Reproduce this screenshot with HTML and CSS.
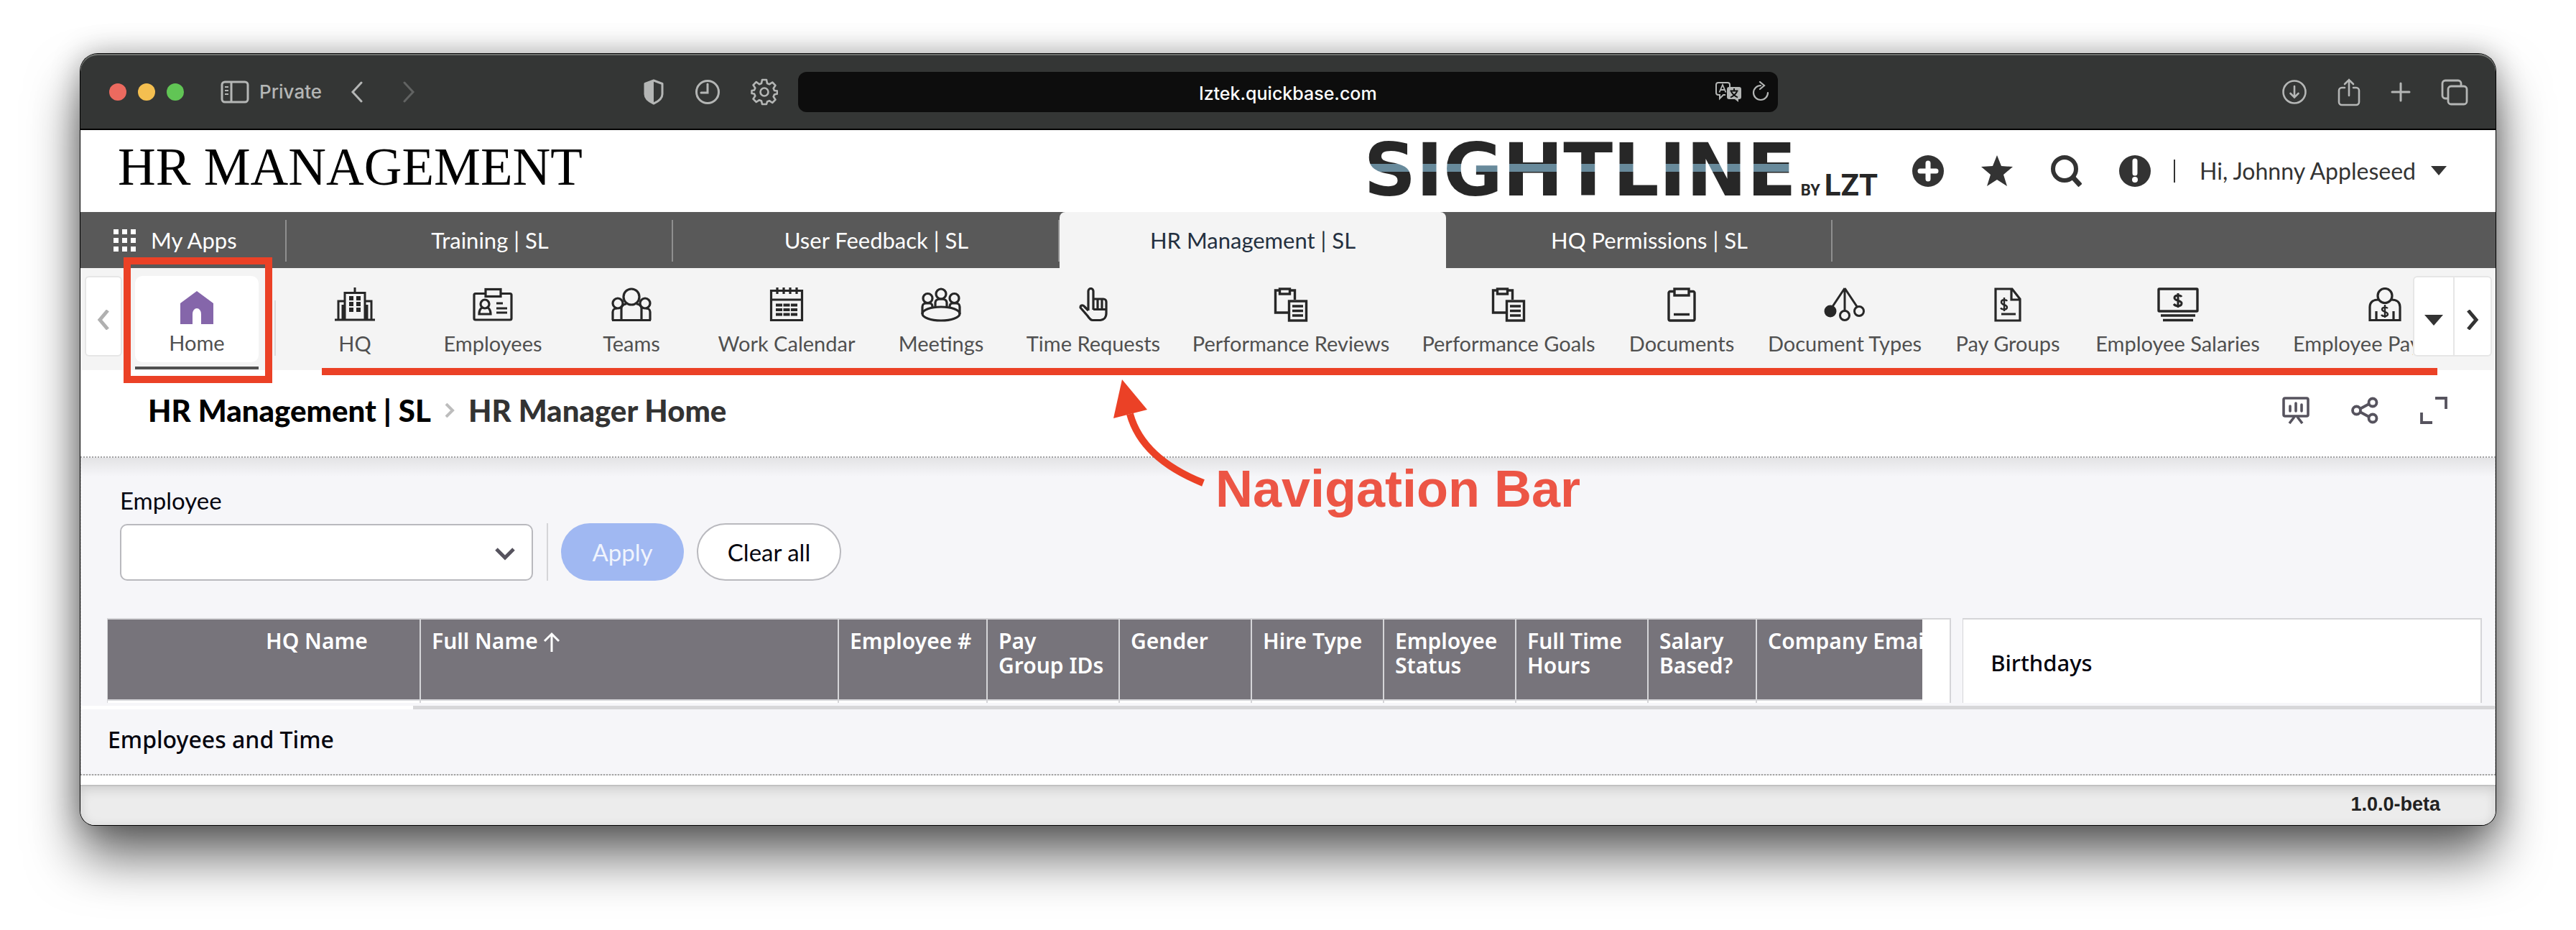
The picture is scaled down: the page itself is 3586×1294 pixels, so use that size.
FILE: index.html
```html
<!DOCTYPE html>
<html lang="en">
<head>
<meta charset="utf-8">
<title>HR Management | SL - HR Manager Home</title>
<link rel="stylesheet" href="styles.css">
</head>
<body>
<div class="window">
  <header class="toolbar">
    <div class="toolbar-left">
      <div class="lights"><span class="light light-red"></span><span class="light light-yellow"></span><span class="light light-green"></span></div>
      <button class="tool sidebar-button" type="button"><svg width="40" height="32" viewBox="0 0 40 32" fill="none" stroke="currentColor" stroke-width="3"><rect x="2" y="2" width="36" height="28" rx="4"/><path d="M15 2v28"/><path d="M6 9h5M6 14h5M6 19h5" stroke-width="2"/></svg><span>Private</span></button>
      <button class="tool" type="button" aria-label="Back"><svg width="18" height="30" viewBox="0 0 18 30" fill="none" stroke="currentColor" stroke-width="3" stroke-linecap="round"><path d="M15 2 3 15l12 13"/></svg></button>
      <button class="tool tool-forward" type="button" aria-label="Forward"><svg width="18" height="30" viewBox="0 0 18 30" fill="none" stroke="currentColor" stroke-width="3" stroke-linecap="round"><path d="M3 2l12 13L3 28"/></svg></button>
      <div class="privacy">
        <button class="tool" type="button" aria-label="Privacy report"><svg width="30" height="36" viewBox="0 0 30 36"><path d="M15 2 27 6.500V21c0 6-5 10-12 13C8 31 3 27 3 21V6.500z" fill="none" stroke="currentColor" stroke-width="3" stroke-linejoin="round"/><path d="M15 2v32C8 31 3 27 3 21V6.500z" fill="currentColor"/></svg></button>
        <button class="tool" type="button" aria-label="History"><svg width="36" height="36" viewBox="0 0 36 36" fill="none" stroke="currentColor" stroke-width="3"><circle cx="18" cy="18" r="15.500"/><path d="M18 7v12H9" stroke-linecap="round"/></svg></button>
        <button class="tool" type="button" aria-label="Settings"><svg width="38" height="38" viewBox="0 0 38 38" fill="none" stroke="currentColor" stroke-width="2.600" stroke-linejoin="round"><path d="M16 2h6l1 5 3 1.300 4.200-2.800 4.300 4.300-2.800 4.200L33 17l4 .500v4l-4 1-1.300 3 2.800 4.200-4.300 4.300-4.200-2.800L23 32.500 22 36h-6l-1-4.500-3-1.300-4.200 2.800-4.300-4.300 2.800-4.200L5 21.500 1.500 21v-4L5 16.500l1.300-3L3.500 9.300 7.800 5 12 8.300 15 7z"/><circle cx="19" cy="19" r="5.500"/></svg></button>
      </div>
    </div>
    <div class="address">
      <span class="address-text">lztek.quickbase.com</span>
      <span class="address-tools">
        <svg width="38" height="30" viewBox="0 0 38 30"><path d="M4 2h14a3 3 0 0 1 3 3v3M2 5v11a3 3 0 0 0 3 3h2v5l5-5h3M2 5a3 3 0 0 1 3-3" fill="none" stroke="currentColor" stroke-width="2"/><path d="M6.500 15.500 11 5l4.500 10.500M8 12h6" fill="none" stroke="currentColor" stroke-width="1.800"/><path d="M20 8h14a3 3 0 0 1 3 3v11a3 3 0 0 1-3 3h-1v4l-5-4h-8a3 3 0 0 1-3-3V11a3 3 0 0 1 3-3z" fill="currentColor"/><path d="M27 10v3M21.500 13.500h11M23 14.500c2 4 5 6 9 8M31 14.500c-2 4-5 6-9 8" fill="none" stroke="#0d0d0d" stroke-width="1.800"/></svg>
        <svg width="24" height="28" viewBox="0 0 24 28" fill="none" stroke="currentColor" stroke-width="2.200" stroke-linecap="round"><path d="M12 6a10 10 0 1 0 10 10M11 1l6 5-6 5"/></svg>
      </span>
    </div>
    <div class="toolbar-right">
      <button class="tool" type="button" aria-label="Downloads"><svg width="36" height="36" viewBox="0 0 36 36" fill="none" stroke="currentColor" stroke-width="2.600" stroke-linecap="round"><circle cx="18" cy="18" r="15.500"/><path d="M18 10v15M12.500 20l5.500 5.500 5.500-5.500"/></svg></button>
      <button class="tool" type="button" aria-label="Share"><svg width="32" height="40" viewBox="0 0 32 40" fill="none" stroke="currentColor" stroke-width="2.600" stroke-linecap="round"><path d="M10 14H6a4 4 0 0 0-4 4v16a4 4 0 0 0 4 4h20a4 4 0 0 0 4-4V18a4 4 0 0 0-4-4h-4M16 25V3M10 9l6-6 6 6"/></svg></button>
      <button class="tool" type="button" aria-label="New tab"><svg width="28" height="28" viewBox="0 0 28 28" stroke="currentColor" stroke-width="3" stroke-linecap="round"><path d="M14 2v24M2 14h24"/></svg></button>
      <button class="tool" type="button" aria-label="Tab overview"><svg width="38" height="38" viewBox="0 0 38 38" fill="none" stroke="currentColor" stroke-width="2.800"><rect x="10" y="11" width="26" height="25" rx="4"/><path d="M10 28H6a4 4 0 0 1-4-4V7a4 4 0 0 1 4-4h18a4 4 0 0 1 4 4v4"/></svg></button>
    </div>
  </header>

  <div class="app">
    <div class="masthead">
      <h1 class="site-title">HR MANAGEMENT</h1>
      <div class="logo"><span class="logo-main">SIGHTLINE</span><span class="logo-by">BY</span><span class="logo-brand">LZT</span></div>
      <div class="actions">
        <button class="action" type="button" aria-label="Add"><svg width="44" height="44" viewBox="0 0 44 44"><circle cx="22" cy="22" r="22" fill="currentColor"/><path d="M22 11v22M11 22h22" stroke="#fff" stroke-width="7" stroke-linecap="round"/></svg></button>
        <button class="action" type="button" aria-label="Favorites"><svg width="44" height="44" viewBox="0 0 44 44"><path d="M22 0l6 15 16 1-13 11 5 16-14-9-14 9 5-16L0 16l16-1z" fill="currentColor"/></svg></button>
        <button class="action" type="button" aria-label="Search"><svg width="44" height="44" viewBox="0 0 44 44" fill="none" stroke="currentColor"><circle cx="20" cy="19" r="16" stroke-width="6"/><path d="M31 30l11 12" stroke-width="7"/></svg></button>
        <button class="action" type="button" aria-label="Alerts"><svg width="44" height="44" viewBox="0 0 44 44"><circle cx="22" cy="22" r="22" fill="currentColor"/><path d="M22 8v17" stroke="#fff" stroke-width="7" stroke-linecap="round"/><circle cx="22" cy="34" r="4" fill="#fff"/></svg></button>
      </div>
      <button class="user" type="button"><span>Hi, Johnny Appleseed</span><svg width="22" height="14" viewBox="0 0 22 14"><path d="M0 0h22L11 13z" fill="currentColor"/></svg></button>
    </div>

    <nav class="apps">
      <a class="my-apps" href="#"><svg width="31" height="31" viewBox="0 0 31 31" fill="currentColor"><path d="M0 0h7v7H0zM12 0h7v7h-7zM24 0h7v7h-7zM0 12h7v7H0zM12 12h7v7h-7zM24 12h7v7h-7zM0 24h7v7H0zM12 24h7v7h-7zM24 24h7v7h-7z"/></svg>My Apps</a>
      <a class="app-tab" href="#">Training | SL</a>
      <a class="app-tab" href="#">User Feedback | SL</a>
      <a class="app-tab app-tab-active" href="#">HR Management | SL</a>
      <a class="app-tab" href="#">HQ Permissions | SL</a>
    </nav>

    <nav class="tables">
      <button class="pager pager-prev" type="button" aria-label="Previous"><svg width="18" height="28" viewBox="0 0 18 28" fill="none" stroke="currentColor" stroke-width="5"><path d="M15 1 4 14l11 13"/></svg></button>
      <a class="home" href="#"><svg width="46" height="46" viewBox="0 0 46 46"><path d="M23 0 46 17v29H29V32a6 8 0 0 0-12 0v14H0V17z" fill="#8566aa"/></svg>Home</a>
      <ul class="table-list">
        <li><a href="#"><svg width="56" height="48" viewBox="0 0 56 48" fill="none" stroke="currentColor" stroke-width="3"><path d="M0 45h56M5 45V19h9M51 45V19h-9M14 45V7.500h28V45M28 7V0M11 24v21M45 24v21"/><path d="M20 12h6v6h-6zM30 12h6v6h-6zM20 20h6v6h-6zM30 20h6v6h-6zM20 28h6v6h-6zM30 28h6v6h-6z" fill="currentColor" stroke="none"/></svg>HQ</a></li>
        <li><a href="#"><svg width="56" height="48" viewBox="0 0 56 48" fill="none" stroke="currentColor" stroke-width="3.200"><path d="M18 8.500H4a2 2 0 0 0-2 2V43a2 2 0 0 0 2 2h48a2 2 0 0 0 2-2V10.500a2 2 0 0 0-2-2H39"/><rect x="18" y="2.500" width="21" height="10"/><circle cx="17" cy="23" r="6"/><path d="M13 28c-3 2-4 5-4 9h16c0-4-1-7-4-9M33 22h9M33 29h15M33 35h15"/></svg>Employees</a></li>
        <li><a href="#"><svg width="56" height="48" viewBox="0 0 56 48" fill="none" stroke="currentColor" stroke-width="3.200"><circle cx="28" cy="13" r="11"/><circle cx="9" cy="22" r="7"/><circle cx="47" cy="22" r="7"/><path d="M2 45.500V34c0-3 3-5 6-5M54 45.500V34c0-3-3-5-6-5M14 45V29c0-3 3-6 7-6M42 45V29c0-3-3-6-7-6M1 45.500h54"/></svg>Teams</a></li>
        <li><a href="#"><svg width="48" height="48" viewBox="0 0 48 48" fill="none" stroke="currentColor" stroke-width="3.200"><path d="M2.500 4.500h43v41h-43zM2 17h44"/><path d="M11 0v9M20 0v9M29 0v9M38 0v9"/><path d="M9 24.500h30M9 31h30M9 37.500h30" stroke-width="4" stroke-dasharray="9 1.500"/></svg>Work Calendar</a></li>
        <li><a href="#"><svg width="56" height="48" viewBox="0 0 56 48" fill="none" stroke="currentColor" stroke-width="3.200"><circle cx="28" cy="9" r="7"/><circle cx="9.500" cy="15" r="6.500"/><circle cx="46.500" cy="15" r="6.500"/><ellipse cx="28" cy="36.500" rx="26" ry="9.500"/><path d="M2 37V27c0-3 2-5 5-5h5c3 0 4 2 4 5M54 37V27c0-3-2-5-5-5h-5c-3 0-4 2-4 5M20 27v-6c0-3 3-5 8-5s8 2 8 5v6"/></svg>Meetings</a></li>
        <li><a href="#"><svg width="40" height="48" viewBox="0 0 40 48" fill="none" stroke="currentColor" stroke-width="3.200" stroke-linejoin="round"><path d="M13 32V5a3.500 3.500 0 0 1 7 0v11h14a4 4 0 0 1 4 4v16c0 6-4 9-8 9.500H19c-3 0-5-3-7-6L2 28c0-4 4-4 6-1l5 5M20 13v18M26 15v16M32 15v16M20 30.500h17"/></svg>Time Requests</a></li>
        <li><a href="#"><svg width="48" height="48" viewBox="0 0 48 48" fill="none" stroke="currentColor" stroke-width="3.400"><path d="M8 4H2.500v31H20M24 4h5.500v13"/><rect x="8.500" y="2" width="14" height="7"/><rect x="21.500" y="19" width="24" height="27"/><path d="M26 26h15M26 32.500h15M26 39h15"/></svg>Performance Reviews</a></li>
        <li><a href="#"><svg width="48" height="48" viewBox="0 0 48 48" fill="none" stroke="currentColor" stroke-width="3.400"><path d="M8 4H2.500v31H20M24 4h5.500v13"/><rect x="8.500" y="2" width="14" height="7"/><rect x="21.500" y="19" width="24" height="27"/><path d="M26 26h15M26 32.500h15M26 39h15"/></svg>Performance Goals</a></li>
        <li><a href="#"><svg width="40" height="48" viewBox="0 0 40 48" fill="none" stroke="currentColor" stroke-width="3.400"><path d="M10 5.500H4a2 2 0 0 0-2 2V44a2 2 0 0 0 2 2h32a2 2 0 0 0 2-2V7.500a2 2 0 0 0-2-2h-6"/><rect x="10" y="2" width="20" height="9"/><path d="M9 37.500h22"/></svg>Documents</a></li>
        <li><a href="#"><svg width="58" height="48" viewBox="0 0 58 48" fill="none" stroke="currentColor" stroke-width="3"><path d="M29 1 11 28M29 1v31M29 1l18 27"/><circle cx="9" cy="33" r="7" fill="currentColor"/><circle cx="29" cy="39" r="6.500"/><circle cx="49" cy="33" r="6.500"/></svg>Document Types</a></li>
        <li><a href="#"><svg width="38" height="48" viewBox="0 0 38 48" fill="none" stroke="currentColor" stroke-width="3.200"><path d="M2 2h23l11 14v30H2zM24 2v15h12M10 37h20"/><path d="M18 19c-1-2-8-3-8 1.500s8 3 8 7-7 4-9 1M14 14v19" stroke-width="2.400"/></svg>Pay Groups</a></li>
        <li><a href="#"><svg width="58" height="48" viewBox="0 0 58 48" fill="none" stroke="currentColor" stroke-width="3.400"><rect x="2" y="2" width="54" height="31" rx="1"/><path d="M5 39h48M8 45.500h42"/><path d="M34 13c-2-3-10-3-10 1.500s10 3 10 7.500-8 5-11 1M29 8v20" stroke-width="3"/></svg>Employee Salaries</a></li>
        <li><a href="#"><svg width="46" height="48" viewBox="0 0 46 48" fill="none" stroke="currentColor" stroke-width="3.200"><circle cx="23" cy="11.500" r="10"/><path d="M14 17c-8 0-12 4-12 10v18.500h42V27c0-6-4-10-12-10M11 45V33M35 45V33"/><path d="M27 29c-2-2-8-2-8 1.500s8 3 8 6.500-7 4-9 1M23 24v18" stroke-width="2.400"/></svg>Employee Payments</a></li>
      </ul>
      <div class="pagers">
        <button class="pager pager-more" type="button" aria-label="All tables"><svg width="26" height="15" viewBox="0 0 26 15"><path d="M0 0h26L13 15z" fill="currentColor"/></svg></button>
        <button class="pager pager-next" type="button" aria-label="Next"><svg width="18" height="28" viewBox="0 0 18 28" fill="none" stroke="currentColor" stroke-width="5"><path d="M3 1l11 13L3 27"/></svg></button>
      </div>
    </nav>

    <div class="crumbs">
      <a class="crumb-app" href="#">HR Management | SL</a>
      <svg width="16" height="20" viewBox="0 0 16 20" fill="none" stroke="#bdbdbd" stroke-width="4"><path d="M3 1l9 9-9 9"/></svg>
      <h2 class="crumb-page">HR Manager Home</h2>
      <div class="page-tools">
        <button class="page-tool" type="button" aria-label="Present"><svg width="38" height="38" viewBox="0 0 38 38" fill="none" stroke="currentColor" stroke-width="3.600"><rect x="2" y="2" width="34" height="25" rx="2"/><path d="M17 28l-7 9M21 28l7 9"/><path d="M11 13v7M19 9v11M27 11v9" stroke-linecap="round"/></svg></button>
        <button class="page-tool" type="button" aria-label="Share page"><svg width="38" height="38" viewBox="0 0 38 38" fill="none" stroke="currentColor" stroke-width="3.800"><circle cx="7.500" cy="19" r="5.500"/><circle cx="30" cy="8" r="5.500"/><circle cx="30" cy="30" r="5.500"/><path d="M12 17l13-7M12 21l13 7"/></svg></button>
        <button class="page-tool" type="button" aria-label="Full screen"><svg width="38" height="38" viewBox="0 0 38 38" fill="none" stroke="currentColor" stroke-width="3.800"><path d="M21 2h15v15M2 22v14h15"/></svg></button>
      </div>
    </div>

    <main class="dashboard">
      <form class="filters">
        <label class="filter-label" for="employee">Employee</label>
        <div class="filter-row">
          <div class="select-wrap">
            <select id="employee" class="select"><option></option></select>
            <svg class="select-arrow" width="30" height="20" viewBox="0 0 30 20" fill="none" stroke="#56535e" stroke-width="5"><path d="M3 3l12 12L27 3"/></svg>
          </div>
          <div class="filter-buttons">
            <button class="btn btn-apply" type="button">Apply</button>
            <button class="btn btn-clear" type="button">Clear all</button>
          </div>
        </div>
      </form>

      <div class="widgets">
        <section class="widget report">
          <table class="grid">
            <colgroup><col class="c-tools"><col class="c-hq"><col class="c-name"><col class="c-number"><col class="c-std"><col class="c-std"><col class="c-std"><col class="c-std"><col class="c-std"><col class="c-salary"><col class="c-email"></colgroup>
            <thead><tr>
              <th class="no-rule"></th><th>HQ Name</th>
              <th>Full Name<svg class="sort" width="24" height="28" viewBox="0 0 24 28" fill="none" stroke="currentColor" stroke-width="3"><path d="M12 28V3M2 13 12 3l10 10"/></svg></th>
              <th>Employee #</th><th>Pay<br>Group IDs</th><th>Gender</th><th>Hire Type</th><th>Employee Status</th><th>Full Time Hours</th><th>Salary Based?</th><th>Company Email</th>
            </tr></thead>
            <tbody><tr><td class="no-rule"></td><td></td><td></td><td></td><td></td><td></td><td></td><td></td><td></td><td></td><td></td></tr></tbody>
          </table>
        </section>
        <section class="widget birthdays"><h3>Birthdays</h3></section>
      </div>
      <div class="progress"><div class="progress-done"></div></div>
      <h3 class="section-title">Employees and Time</h3>
    </main>

    <div class="annotation-box"></div>
    <div class="annotation-line"></div>
    <svg class="annotation-arrow" width="130" height="160" viewBox="0 0 130 160"><path d="M25 48Q42 110 127 144" fill="none" stroke="#eb4126" stroke-width="10"/><path d="M14 0 49 42 2 54z" fill="#eb4126"/></svg>
    <div class="annotation-text">Navigation Bar</div>
  </div>
  <footer class="status">1.0.0-beta</footer>
</div>
</body>
</html>
```
FILE: styles.css
```css
* { box-sizing: border-box; }

body {
  margin: 0;
  padding: 75px 112px 146px;
  background: #fff;
  color: #333;
  font-family: Lato, "Liberation Sans", sans-serif;
}

button {
  margin: 0;
  padding: 0;
  border: 0;
  background: none;
  color: inherit;
  font: inherit;
}

a { color: inherit; text-decoration: none; }
svg { display: block; flex: none; }
h1, h2, h3 { margin: 0; }

.window {
  border-radius: 24px 24px 20px 20px;
  box-shadow: 0 0 0 1px #000, 0 44px 72px rgba(0, 0, 0, .6), 0 0 40px rgba(0, 0, 0, .3);
}

/* Browser toolbar */
.toolbar {
  display: grid;
  grid-template-columns: 1fr minmax(0, 1364px) 1fr;
  align-items: center;
  height: 106px;
  padding-top: 2px;
  border-bottom: 2px solid #000;
  border-radius: 24px 24px 0 0;
  box-shadow: inset 0 2px #6f726f;
  background: #343635;
  color: #b4b6b5;
  font: 500 26px/32px Inter, "Liberation Sans", sans-serif;
}

.toolbar-left, .toolbar-right { display: flex; align-items: center; }
.toolbar-left { padding: 0 28px 0 40px; }
.lights { display: flex; gap: 16px; margin-right: 51px; }
.light { width: 24px; height: 24px; border-radius: 50%; }
.light-red { background: #ec6a5f; }
.light-yellow { background: #f4bf50; }
.light-green { background: #61c555; }
.sidebar-button { display: flex; align-items: center; gap: 14px; margin-right: 40px; }
.tool-forward { margin-left: 54px; color: #616362; }
.privacy { display: flex; align-items: center; gap: 42px; margin-left: auto; }

.address {
  display: grid;
  grid-template-columns: 1fr auto 1fr;
  align-items: center;
  height: 56px;
  border-radius: 12px;
  background: #0d0d0d;
}
.address-text { grid-column: 2; padding-top: 4px; color: #fff; font-size: 25px; }
.address-tools { display: flex; justify-content: flex-end; gap: 14px; padding-right: 12px; }
.toolbar-right { justify-content: flex-end; gap: 42px; padding-right: 38px; }

/* Site header */
.app { position: relative; padding-bottom: 1px; background: #fff; }

.masthead {
  display: flex;
  align-items: center;
  height: 114px;
  padding: 0 68px 0 52px;
}
.site-title {
  padding-bottom: 10px;
  color: #000;
  font: 400 73px/84px "Liberation Serif", serif;
}
.logo {
  display: flex;
  align-items: baseline;
  gap: 6px;
  margin-left: auto;
  padding-bottom: 2px;
  color: #272727;
}
.logo-main {
  background: linear-gradient(#272727 41px, #688a9b 41px, #688a9b 52px, #272727 52px);
  background-clip: text;
  color: transparent;
  font: 700 101px/100px "DejaVu Sans", sans-serif;
}
.logo-by { font: 700 22px/24px Roboto, sans-serif; }
.logo-brand { font: 700 42px/44px Roboto, sans-serif; }
.actions { display: flex; gap: 52px; margin-left: 48px; }
.action { color: #333; }
.user {
  display: flex;
  align-items: center;
  gap: 21px;
  margin-left: 32px;
  padding-left: 34px;
  border-left: 2px solid #333;
  font-size: 32px;
  line-height: 32px;
}

/* Application tabs */
.apps {
  display: flex;
  height: 78px;
  background: #595959;
  color: #fff;
  font-size: 31px;
  line-height: 58px;
}
.my-apps, .app-tab { position: relative; padding: 10px 0; }
.my-apps { display: flex; align-items: center; gap: 21px; width: 287px; padding-left: 46px; }
.app-tab { width: 538px; padding-left: 28px; text-align: center; }
.my-apps::after, .app-tab::after {
  content: "";
  position: absolute;
  top: 11px;
  right: 0;
  bottom: 9px;
  width: 2px;
  background: #8f8f8f;
}
.app-tab-active { padding-left: 0; border-radius: 8px 8px 0 0; background: #f4f4f4; color: #243040; }
.app-tab-active::after { display: none; }

/* Table navigation */
.tables {
  display: flex;
  align-items: flex-start;
  height: 142px;
  padding: 11px 5px 0 6px;
  background: #f4f4f4;
  color: #505050;
  font-size: 29px;
  line-height: 36px;
}
.pager {
  display: flex;
  align-items: center;
  justify-content: center;
  height: 112px;
  padding-top: 10px;
  background: #fff;
  border: 2px solid #e6e6e6;
  color: #333;
}
.pager-prev { width: 52px; border-radius: 6px; color: #b0b0b0; }
.pagers { display: flex; }
.pager-more { width: 58px; border-radius: 6px 0 0 6px; }
.pager-next { width: 52px; border-left: 0; border-radius: 0 6px 6px 0; }

.home {
  position: relative;
  display: flex;
  flex-direction: column;
  align-items: center;
  gap: 8px;
  width: 172px;
  height: 120px;
  margin-left: 18px;
  padding-top: 21px;
  border-radius: 10px;
  background: #fff;
}
.home::after {
  content: "";
  position: absolute;
  left: 0;
  right: 0;
  bottom: -10px;
  height: 4px;
  background: #505050;
}

.table-list {
  position: relative;
  display: grid;
  grid-template-columns: 144px 144px 146px 190px 144px 184px 270px 240px 146px 212px 146px 231px 250px;
  gap: 48px;
  flex: 1;
  min-width: 0;
  overflow: hidden;
  margin: 0 0 0 22px;
  padding: 16px 0 20px 40px;
  list-style: none;
}
.table-list a {
  display: flex;
  flex-direction: column;
  align-items: center;
  gap: 12px;
  white-space: nowrap;
}
.table-list svg { color: #272727; }
.table-list::before {
  content: "";
  position: absolute;
  left: 0;
  top: 34px;
  width: 2px;
  height: 77px;
  background: #dcdcdc;
}

/* Breadcrumb */
.crumbs {
  display: flex;
  align-items: center;
  gap: 18px;
  height: 120px;
  padding: 0 67px 8px 94px;
  font-size: 42px;
  line-height: 48px;
}
.crumb-app { color: #000; font-weight: 900; }
.crumb-page { color: #333; font-size: 42px; font-weight: 900; }
.page-tools { display: flex; gap: 58px; margin-left: auto; color: #56535e; }

/* Dashboard */
.dashboard {
  margin-bottom: 12px;
  border: 2px dotted #a3a3a3;
  border-width: 2px 1px;
  background: linear-gradient(#e3e3e5, #f6f6f9 26px);
  color: #05050f;
}
.filters { padding: 39px 54px 0; font-size: 33px; }
.filter-label { display: block; line-height: 40px; }
.filter-row { display: flex; align-items: center; gap: 19px; padding-top: 12px; }
.select-wrap { position: relative; width: 575px; }
.select {
  display: block;
  width: 100%;
  height: 79px;
  border: 2px solid #b9b9be;
  border-radius: 10px;
  background: #fff;
  appearance: none;
  font: inherit;
}
.select-arrow { position: absolute; right: 24px; top: 32px; pointer-events: none; }
.filter-buttons { display: flex; gap: 18px; padding-left: 18px; border-left: 2px solid #d5d5d8; }
.btn { height: 80px; border-radius: 40px; }
.btn-apply { width: 171px; background: #a0b8f2; color: #f0f4fd; }
.btn-clear { width: 201px; border: 2px solid #b9b9be; background: #fff; color: #05050f; }

.widgets {
  display: grid;
  grid-template-columns: 2568fr 723fr;
  gap: 16px;
  padding: 52px 18px 0 36px;
}
.widget { height: 118px; border: 2px solid #d5d5d8; border-width: 2px 2px 0 1px; background: #fff; }
.report { padding-right: 40px; overflow: hidden; }
.birthdays { padding: 40px 38px; }
.birthdays h3 { font: 500 31px/40px "Noto Sans", sans-serif; }

.grid {
  width: 100%;
  border-collapse: collapse;
  table-layout: fixed;
  font-family: "Noto Sans", sans-serif;
}
.grid th {
  height: 112px;
  padding: 13px 0 0 15px;
  overflow: hidden;
  vertical-align: top;
  border-right: 2px solid #d5d5d8;
  border-bottom: 2px solid #d5d5d8;
  background: #77747b;
  color: #fff;
  font-size: 30px;
  font-weight: 600;
  line-height: 34px;
  text-align: left;
}
.grid td { height: 4px; padding: 0; border-right: 2px solid #d5d5d8; }
.grid th:last-child, .grid td:last-child, .grid .no-rule { border-right: 0; }
.grid th:last-child { white-space: nowrap; }
.sort { display: inline-block; margin-left: 7px; vertical-align: -4px; }
.c-tools { width: 205px; }
.c-hq { width: 230px; }
.c-name { width: 582px; }
.c-number { width: 207px; }
.c-std { width: 184px; }
.c-salary { width: 151px; }
.c-email { width: 231px; }

.progress { height: 5px; margin-top: 4px; background: #d7d7d9; }
.progress-done { width: 462px; height: 5px; background: #fff; }
.section-title { padding: 22px 37px 28px; font: 500 32px/40px "Noto Sans", sans-serif; }

/* Training callouts drawn over the page */
.annotation-box {
  position: absolute;
  left: 60px;
  top: 177px;
  width: 207px;
  height: 175px;
  border: 10px solid #eb4126;
}
.annotation-line {
  position: absolute;
  left: 336px;
  right: 81px;
  top: 331px;
  height: 10px;
  background: #eb4126;
}
.annotation-arrow { position: absolute; left: 1436px; top: 347px; }
.annotation-text {
  position: absolute;
  left: 1580px;
  top: 457px;
  color: #ec5545;
  font: 700 72px/84px "Liberation Sans", sans-serif;
}

.status {
  height: 56px;
  padding-right: 77px;
  border-top: 2px solid #c2c2c2;
  border-radius: 0 0 20px 20px;
  background: #ececec;
  box-shadow: inset 0 4px 16px rgba(0, 0, 0, .14);
  color: #222;
  font: 700 27px/50px "Liberation Sans", sans-serif;
  text-align: right;
}
```
